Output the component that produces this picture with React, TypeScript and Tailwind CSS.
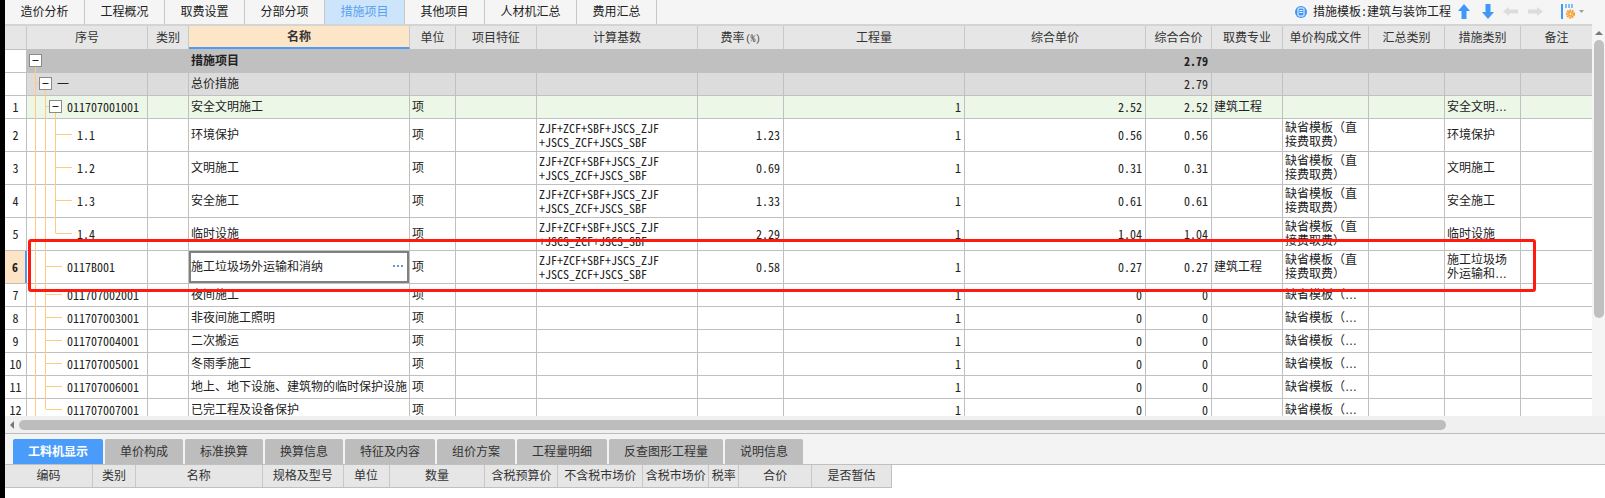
import React from "react";

const CJK = "font-['Liberation_Sans','Noto_Sans_CJK_SC',sans-serif]";
const MONO = "font-['Noto_Sans_Mono_CJK_SC','Liberation_Mono','Noto_Sans_CJK_SC',monospace]";
const GRID =
  "grid grid-cols-[22px_121px_41px_221px_46px_81px_161px_86px_181px_181px_66px_71px_86px_76px_76px_71px]";

const topTabs = [
  { t: "造价分析", w: "w-[80px]" },
  { t: "工程概况", w: "w-[80px]" },
  { t: "取费设置", w: "w-[80px]" },
  { t: "分部分项", w: "w-[80px]" },
  { t: "措施项目", w: "w-[80px]", active: true },
  { t: "其他项目", w: "w-[80px]" },
  { t: "人材机汇总", w: "w-[92px]" },
  { t: "费用汇总", w: "w-[80px]" },
];

const headers = ["", "序号", "类别", "名称", "单位", "项目特征", "计算基数", "费率", "工程量", "综合单价", "综合合价", "取费专业", "单价构成文件", "汇总类别", "措施类别", "备注"];

const BASIS = "ZJF+ZCF+SBF+JSCS_ZJF\n+JSCS_ZCF+JSCS_SBF";
const TPL = "缺省模板（直接费取费）";
const TPL_S = "缺省模板（…";

type Row = {
  no: string;
  code?: string;
  codeCls?: string;
  name: string;
  unit?: string;
  basis?: string;
  rate?: string;
  qty?: string;
  price?: string;
  total?: string;
  spec?: string;
  tpl?: string;
  cat?: string;
  h: string;
  bg: string;
  bold?: boolean;
  selected?: boolean;
};

const rows: Row[] = [
  { no: "", name: "措施项目", total: "2.79", h: "h-[23px]", bg: "bg-[#c0c0c0]", bold: true },
  { no: "", code: "一", codeCls: "pl-[30px]", name: "总价措施", total: "2.79", h: "h-[23px]", bg: "bg-[#dcdcdc]" },
  { no: "1", code: "011707001001", codeCls: "pl-[40px]", name: "安全文明施工", unit: "项", qty: "1", price: "2.52", total: "2.52", spec: "建筑工程", cat: "安全文明…", h: "h-[23px]", bg: "bg-[#ecf7e8]" },
  { no: "2", code: "1.1", codeCls: "pl-[50px]", name: "环境保护", unit: "项", basis: BASIS, rate: "1.23", qty: "1", price: "0.56", total: "0.56", tpl: TPL, cat: "环境保护", h: "h-[33px]", bg: "bg-white" },
  { no: "3", code: "1.2", codeCls: "pl-[50px]", name: "文明施工", unit: "项", basis: BASIS, rate: "0.69", qty: "1", price: "0.31", total: "0.31", tpl: TPL, cat: "文明施工", h: "h-[33px]", bg: "bg-white" },
  { no: "4", code: "1.3", codeCls: "pl-[50px]", name: "安全施工", unit: "项", basis: BASIS, rate: "1.33", qty: "1", price: "0.61", total: "0.61", tpl: TPL, cat: "安全施工", h: "h-[33px]", bg: "bg-white" },
  { no: "5", code: "1.4", codeCls: "pl-[50px]", name: "临时设施", unit: "项", basis: BASIS, rate: "2.29", qty: "1", price: "1.04", total: "1.04", tpl: TPL, cat: "临时设施", h: "h-[33px]", bg: "bg-white" },
  { no: "6", code: "0117B001", codeCls: "pl-[40px]", name: "施工垃圾场外运输和消纳", unit: "项", basis: BASIS, rate: "0.58", qty: "1", price: "0.27", total: "0.27", spec: "建筑工程", tpl: TPL, cat: "施工垃圾场外运输和…", h: "h-[33px]", bg: "bg-white", selected: true },
  { no: "7", code: "011707002001", codeCls: "pl-[40px]", name: "夜间施工", unit: "项", qty: "1", price: "0", total: "0", tpl: TPL_S, h: "h-[23px]", bg: "bg-white" },
  { no: "8", code: "011707003001", codeCls: "pl-[40px]", name: "非夜间施工照明", unit: "项", qty: "1", price: "0", total: "0", tpl: TPL_S, h: "h-[23px]", bg: "bg-white" },
  { no: "9", code: "011707004001", codeCls: "pl-[40px]", name: "二次搬运", unit: "项", qty: "1", price: "0", total: "0", tpl: TPL_S, h: "h-[23px]", bg: "bg-white" },
  { no: "10", code: "011707005001", codeCls: "pl-[40px]", name: "冬雨季施工", unit: "项", qty: "1", price: "0", total: "0", tpl: TPL_S, h: "h-[23px]", bg: "bg-white" },
  { no: "11", code: "011707006001", codeCls: "pl-[40px]", name: "地上、地下设施、建筑物的临时保护设施", unit: "项", qty: "1", price: "0", total: "0", tpl: TPL_S, h: "h-[23px]", bg: "bg-white" },
  { no: "12", code: "011707007001", codeCls: "pl-[40px]", name: "已完工程及设备保护", unit: "项", qty: "1", price: "0", total: "0", tpl: TPL_S, h: "h-[23px]", bg: "bg-white" },
];

const bottomTabs = [
  { t: "工料机显示", w: "w-[90px]", active: true },
  { t: "单价构成", w: "w-[78px]" },
  { t: "标准换算", w: "w-[78px]" },
  { t: "换算信息", w: "w-[78px]" },
  { t: "特征及内容", w: "w-[90px]" },
  { t: "组价方案", w: "w-[78px]" },
  { t: "工程量明细", w: "w-[90px]" },
  { t: "反查图形工程量", w: "w-[114px]" },
  { t: "说明信息", w: "w-[78px]" },
];

const subCols = [
  { t: "编码", w: "w-[88px]" },
  { t: "类别", w: "w-[43px]" },
  { t: "名称", w: "w-[127px]" },
  { t: "规格及型号", w: "w-[81px]" },
  { t: "单位", w: "w-[46px]" },
  { t: "数量", w: "w-[96px]" },
  { t: "含税预算价", w: "w-[73px]" },
  { t: "不含税市场价", w: "w-[85px]" },
  { t: "含税市场价", w: "w-[66px]" },
  { t: "税率", w: "w-[30px]" },
  { t: "合价", w: "w-[73px]" },
  { t: "是否暂估", w: "w-[79px]" },
];

const CELL = "flex items-center overflow-hidden border-r border-[#c0c0c0] px-[2px] min-w-0";
const CLIP = "whitespace-pre-line leading-[14px]";

function TreeOverlay() {
  const boxes = [
    [29.5, 54.5],
    [39.5, 77.5],
    [49.5, 100.5],
  ];
  return (
    <svg className="absolute left-0 top-0 pointer-events-none" width="200" height="390" viewBox="5 26 200 390">
      <g stroke="#ffcb80" strokeWidth="1" fill="none">
        <path d="M35.5 67V416" />
        <path d="M45.5 90V409" />
        <path d="M55.5 113V233.5" />
        <path d="M36 83.5H39M46 106.5H49" />
        <path d="M56 134.5H72M56 167.5H72M56 200.5H72M56 233.5H72" />
        <path d="M46 266.5H62M46 294.5H62M46 317.5H62M46 340.5H62M46 363.5H62M46 386.5H62M46 409.5H62" />
      </g>
      {boxes.map(([x, y], i) => (
        <g key={i}>
          <rect x={x} y={y} width={12} height={12} fill="#fff" stroke="#8a8a8a" />
          <path d={`M${x + 3} ${y + 6}H${x + 9}`} stroke="#222" strokeWidth="1" />
        </g>
      ))}
    </svg>
  );
}

function RowView({ r }: { r: Row }) {
  const num = `${MONO} justify-end pr-[3px]`;
  return (
    <div className={`${GRID} ${r.h} border-b border-[#c0c0c0]`}>
      <div
        className={`${CELL} justify-center ${MONO} ${
          r.selected ? "bg-[#fde4c4] font-bold border-r-2 border-r-[#4a9cf5]" : "bg-white"
        }`}
      >
        {r.no}
      </div>
      <div className={`${CELL} ${r.bg} ${MONO} !px-0`}>
        <span className={`${r.codeCls ?? ""} whitespace-nowrap`}>{r.code}</span>
      </div>
      <div className={`${CELL} ${r.bg}`} />
      <div className={`${CELL} ${r.bg} relative ${r.bold ? "font-bold" : ""} whitespace-nowrap`}>
        {r.name}
        {r.selected && (
          <>
            <span className="absolute inset-0 border-2 border-[#808080]" />
            <span className="absolute right-[6px] top-[14px] flex gap-[2px]">
              <i className="block size-[2px] bg-[#5b9bd5]" />
              <i className="block size-[2px] bg-[#5b9bd5]" />
              <i className="block size-[2px] bg-[#5b9bd5]" />
            </span>
          </>
        )}
      </div>
      <div className={`${CELL} ${r.bg}`}>{r.unit}</div>
      <div className={`${CELL} ${r.bg}`} />
      <div className={`${CELL} ${r.bg} ${MONO} ${CLIP}`}>{r.basis}</div>
      <div className={`${CELL} ${r.bg} ${num}`}>{r.rate}</div>
      <div className={`${CELL} ${r.bg} ${num}`}>{r.qty}</div>
      <div className={`${CELL} ${r.bg} ${num}`}>{r.price}</div>
      <div className={`${CELL} ${r.bg} ${num} ${r.bold ? "font-bold" : ""}`}>{r.total}</div>
      <div className={`${CELL} ${r.bg} whitespace-nowrap`}>{r.spec}</div>
      <div className={`${CELL} ${r.bg} ${CLIP}`}>{r.tpl}</div>
      <div className={`${CELL} ${r.bg}`} />
      <div className={`${CELL} ${r.bg} ${CLIP}`}>{r.cat}</div>
      <div className={`flex ${r.bg}`} />
    </div>
  );
}

function Toolbar() {
  return (
    <div className="flex items-center pr-[21px] pb-[1px]">
      <svg width="12" height="14" viewBox="0 0 12 14" className="mr-[6px]">
        <circle cx="6" cy="7" r="6" fill="#3d95f5" />
        <rect x="3" y="3" width="6" height="8" rx="1" fill="none" stroke="#fff" />
        <path d="M4.5 5.5H7.5M4.5 7.5H7.5" stroke="#fff" />
      </svg>
      <span className="w-[137px] whitespace-nowrap text-[#222]">
        措施模板<span className={MONO}>:</span>建筑与装饰工程
      </span>
      <svg width="12" height="15" viewBox="0 0 12 15" className="ml-[8px]">
        <path d="M6 0L12 7H8.5V15H3.5V7H0Z" fill="#3f97f7" />
      </svg>
      <svg width="12" height="15" viewBox="0 0 12 15" className="ml-[12px]">
        <path d="M6 15L12 8H8.5V0H3.5V8H0Z" fill="#3f97f7" />
      </svg>
      <svg width="15" height="9" viewBox="0 0 15 9" className="ml-[9px]">
        <path d="M0 4.5L6 0V2.5H15V6.5H6V9Z" fill="#dcdcdc" />
      </svg>
      <svg width="15" height="9" viewBox="0 0 15 9" className="ml-[10px]">
        <path d="M15 4.5L9 0V2.5H0V6.5H9V9Z" fill="#dcdcdc" />
      </svg>
      <svg width="14" height="15" viewBox="0 0 14 15" className="ml-[18px]">
        <rect x="0" y="0" width="2" height="15" fill="#3f97f7" />
        <path d="M5 0V4M8 0V4M11 0V4" stroke="#3f97f7" strokeWidth="1.2" />
        <circle cx="9.5" cy="10" r="3.4" fill="none" stroke="#f5a030" strokeWidth="2.4" strokeDasharray="1.8 0.6" />
        <circle cx="9.5" cy="10" r="2.4" fill="#f5a030" />
        <path d="M8.3 10H10.7M9.5 8.8V11.2" stroke="#ffe9c8" />
      </svg>
      <svg width="5" height="3" viewBox="0 0 5 3" className="ml-[4px]">
        <path d="M0 0H5L2.5 3Z" fill="#a0a0a0" />
      </svg>
    </div>
  );
}

export default function App() {
  return (
    <div className={`relative flex h-[498px] w-[1605px] overflow-hidden bg-black pl-[5px] text-[12px] text-[#222] ${CJK}`}>
      <div className="flex w-[1600px] flex-col bg-white">
        {/* top bar */}
        <div className="flex h-[26px] justify-between border-b-2 border-[#d4d4d4] bg-[#f5f5f5]">
          <div className="flex">
            {topTabs.map((t) => (
              <div
                key={t.t}
                className={`flex ${t.w} items-center justify-center border-r border-[#c8c8c8] ${
                  t.active ? "bg-[#cce5fb] text-[#5a9ff0]" : ""
                }`}
              >
                {t.t}
              </div>
            ))}
          </div>
          <Toolbar />
        </div>

        {/* table and vertical scrollbar */}
        <div className="flex h-[390px]">
          <div className="relative w-[1587px] overflow-hidden">
            <div className={`${GRID} h-[24px] border-b border-[#c0c0c0] bg-[#e6e6e6] text-[#333]`}>
              {headers.map((h, i) => (
                <div
                  key={i}
                  className={`flex items-center justify-center whitespace-nowrap ${i === 15 ? "" : "border-r border-[#c8c8c8]"} ${
                    i === 3 ? "border-b-2 border-b-[#4a9cf5] bg-[#fde5c8] font-bold" : ""
                  }`}
                >
                  {h}
                  {i === 7 && <span className={`ml-[1px] text-[10px] ${MONO}`}>(%)</span>}
                </div>
              ))}
            </div>
            {rows.map((r, i) => (
              <RowView key={i} r={r} />
            ))}
            <TreeOverlay />
          </div>
          <div className="relative -mt-[2px] flex h-[392px] w-[13px] flex-col items-center bg-[#f5f5f5]">
            <svg width="10" height="4" viewBox="0 0 10 4" className="mt-[7px]">
              <path d="M5 0L9 4H1Z" fill="#777" />
            </svg>
            <div className="mt-[5px] h-[278px] w-[10px] rounded-[5px] bg-[#c0c0c0]" />
          </div>
        </div>

        {/* horizontal scrollbar */}
        <div className="flex h-[18px] items-center gap-[5px] border-b border-[#bdbdbd] bg-[#f0f0f0] pl-[5px] pt-[1px]">
          <svg width="4" height="8" viewBox="0 0 4 8">
            <path d="M4 0V8L0 4Z" fill="#777" />
          </svg>
          <div className="h-[10px] w-[1427px] rounded-[5px] bg-[#bdbdbd]" />
        </div>

        {/* bottom tabs */}
        <div className="flex h-[30px] items-end gap-[2px] bg-[#f3f3f3] pl-[8px]">
          {bottomTabs.map((t) => (
            <div
              key={t.t}
              className={`flex h-[25px] ${t.w} items-center justify-center rounded-t-[2px] ${
                t.active ? "bg-[#4a9cfb] font-bold text-white" : "bg-[#bdbdbd] text-[#333]"
              }`}
            >
              {t.t}
            </div>
          ))}
        </div>

        {/* detail header */}
        <div className="border-t border-[#c0c0c0]">
          <div className="flex h-[23px] w-[887px] border-b border-r border-[#c0c0c0] bg-[#e6e6e6] text-[#333]">
            {subCols.map((c) => (
              <div
                key={c.t}
                className={`flex ${c.w} items-center justify-center whitespace-nowrap border-r border-[#c8c8c8] last:border-r-0`}
              >
                {c.t}
              </div>
            ))}
          </div>
        </div>
      </div>

      {/* highlight frame */}
      <div className="pointer-events-none absolute left-[28px] top-[239px] h-[53px] w-[1508px] rounded-[3px] border-[3px] border-[#ff1a0f]" />
    </div>
  );
}
